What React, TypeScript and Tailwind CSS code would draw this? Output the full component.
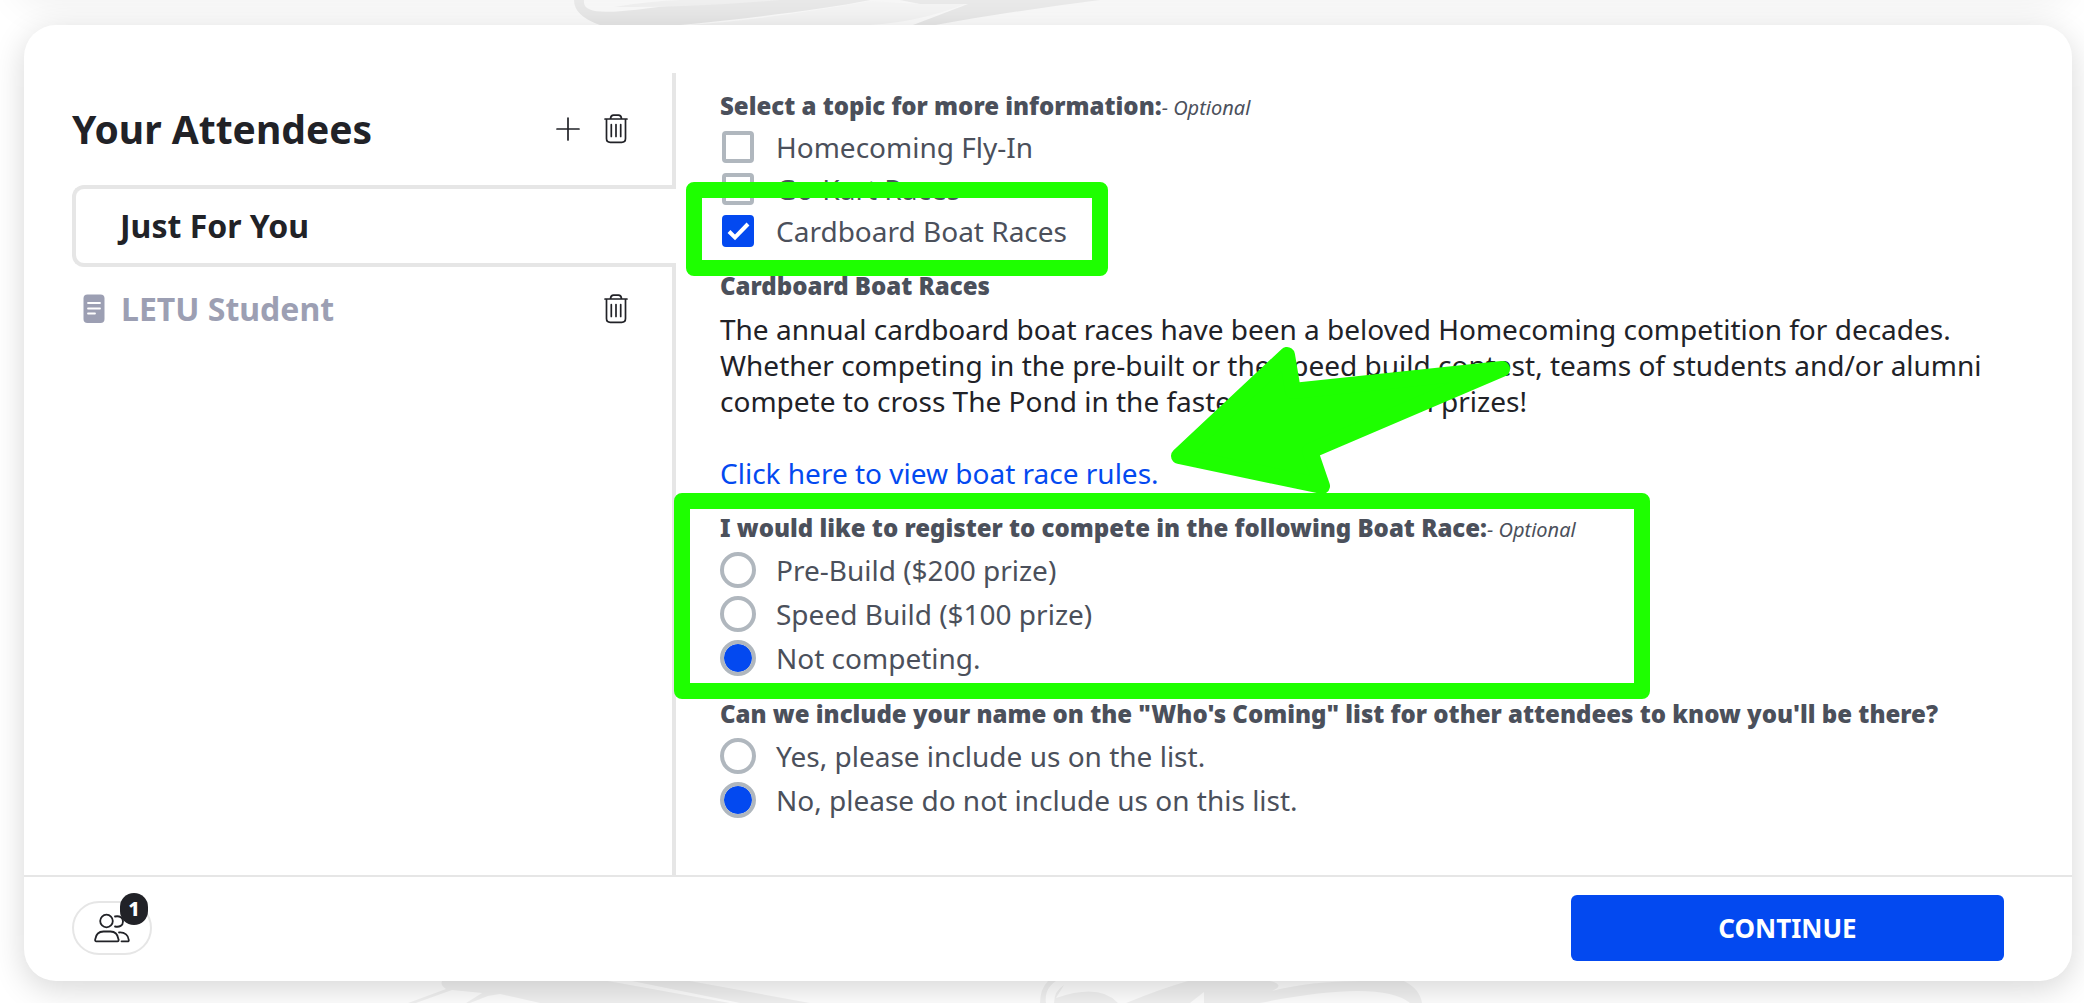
import React from "react";

function Trash() {
  return (
    <svg width="24" height="30" viewBox="0 0 24 30" fill="none" stroke="#212227" strokeWidth="1.7" strokeLinecap="round" strokeLinejoin="round">
      <path d="M1 5H23M6.5 4.5C6.8 2 8 1.2 9.5 1.2H14.5C16 1.2 17.2 2 17.5 4.5M2.5 5V24.5Q2.5 28.3 6.3 28.3H17.7Q21.5 28.3 21.5 24.5V5M7.3 10.5V22.5M12 10.5V22.5M16.7 10.5V22.5" />
    </svg>
  );
}

function Plus() {
  return (
    <svg width="24" height="24" viewBox="0 0 24 24" stroke="#212227" strokeWidth="1.7" strokeLinecap="round">
      <path d="M1 12H23M12 1V23" />
    </svg>
  );
}

function Doc() {
  return (
    <svg width="22" height="30" viewBox="0 0 22 30">
      <rect x="0.5" y="0.5" width="21" height="28.5" rx="4" fill="#9c9fb3" />
      <path d="M5 9H17M5 14.5H17M5 19.5H12" stroke="#fff" strokeWidth="1.8" strokeLinecap="round" />
    </svg>
  );
}

function People() {
  return (
    <svg width="36" height="30" viewBox="0 0 36 30" fill="none" stroke="#212227" strokeWidth="1.8" strokeLinecap="round" strokeLinejoin="round">
      <circle cx="12.5" cy="8" r="6.3" />
      <path d="M2 28.3H23.5C24.5 28.3 24.8 27.5 24.5 26.3C23.7 21 20.5 18.5 16.5 18.5H9.5C5.5 18.5 2 21 1.2 26.3C1 27.5 1.2 28.3 2 28.3ZM21 3.5C26 2.5 29 5 29 8.5C29 12.5 25.5 14.5 21 13.5M25 19.5C31 19 34.5 22.5 34.8 27C34.9 28 34.5 28.3 33.5 28.3H27.5" />
    </svg>
  );
}

function Check({ label, checked }: { label: string; checked?: boolean }) {
  return (
    <label className="flex h-[42px] items-center gap-[22px] pl-0.5 text-[28px] text-[#4b505b]">
      <span className="grid">
        <input type="checkbox" defaultChecked={checked} className="peer col-start-1 row-start-1 size-8 appearance-none rounded border-4 border-[#b0b7be] bg-white checked:border-[#0349f0] checked:bg-[#0349f0]" />
        <svg className="pointer-events-none col-start-1 row-start-1 hidden size-8 peer-checked:block" viewBox="0 0 32 32" fill="none" stroke="#fff" strokeWidth="4">
          <path d="M7 16.5L13 22.5L26 9" />
        </svg>
      </span>
      {label}
    </label>
  );
}

function Radio({ label, name, checked }: { label: string; name: string; checked?: boolean }) {
  return (
    <label className="flex h-11 items-center gap-5 text-[28px] text-[#4b505b]">
      <input type="radio" name={name} defaultChecked={checked} className="size-9 appearance-none rounded-full border-4 border-[#b0b7be] bg-white bg-clip-padding checked:bg-[#0349f0]" />
      {label}
    </label>
  );
}

const legend = "block text-[24px] leading-[40px] font-black text-[#4b505b]";

export default function App() {
  return (
    <div className="relative overflow-hidden bg-white px-3 pt-[25px] pb-[22px] font-['Noto_Sans','Open_Sans',sans-serif] text-[#212227]">
      <div className="absolute inset-x-6 -top-8 h-6 rounded-b-[32px] shadow-[0_4px_40px_12px_rgba(0,0,0,0.06)]" />
      <svg className="absolute top-0 left-[560px]" width="560" height="25" viewBox="0 0 560 25">
        <path d="M14 0H24C22 16 50 14 120 4L140 0H310C260 10 190 18 120 25H40Q14 16 14 0Z" fill="#e8e8e8" />
        <path d="M54 7Q100 -1 140 0H220Q130 8 54 7Z" fill="#efefef" />
        <path d="M340 0H540Q460 10 375 25H353L408 4H360Z" fill="#e9e9e9" />
        <path d="M360 4H405Q360 22 310 25H130Q210 19 310 1Z" fill="#f4f4f4" />
      </svg>
      <main className="relative ml-3 rounded-[32px] bg-white shadow-[0_8px_32px_rgba(0,0,0,0.16)]">
        <div className="flex pt-12">
          <aside className="flex w-[652px] shrink-0 flex-col pl-12">
            <div className="flex h-28 items-center border-r-4 border-[#e6e6e6] pr-11">
              <h1 className="grow text-[39px] leading-[54px] font-bold">Your Attendees</h1>
              <button aria-label="Add attendee" className="mr-6"><Plus /></button>
              <button aria-label="Remove all attendees"><Trash /></button>
            </div>
            <button className="h-[82px] rounded-l-xl border-4 border-r-0 border-[#e6e6e6] pl-11 text-left text-[32px] font-bold">Just For You</button>
            <div className="flex grow items-start border-r-4 border-[#e6e6e6] pt-5 pr-11 pl-[11px]">
              <div className="flex h-[44px] grow items-center">
                <Doc />
                <a href="#student" className="ml-4 grow text-[32px] leading-[42px] font-bold text-[#9c9fb3]">LETU Student</a>
                <button aria-label="Remove LETU Student"><Trash /></button>
              </div>
            </div>
          </aside>
          <form className="grow pt-[13px] pr-10 pb-[53px] pl-11">
            <fieldset>
              <legend className={legend}>Select a topic for more information:<i className="text-xl font-normal">- Optional</i></legend>
              <Check label="Homecoming Fly-In" />
              <Check label="Go-Kart Races" />
              <div className="relative">
                <Check label="Cardboard Boat Races" checked />
                <div className="pointer-events-none absolute -top-7 -left-[34px] h-[94px] w-[422px] rounded-lg border-16 border-[#1eff00]" />
              </div>
            </fieldset>
            <section className="relative mt-4">
              <h2 className="text-[24px] leading-[36px] font-black text-[#4b505b]">Cardboard Boat Races</h2>
              <p className="mt-[7px] text-[28px] leading-[36px]">
                The annual cardboard boat races have been a beloved Homecoming competition for decades.<br />
                Whether competing in the pre-built or the speed build contest, teams of students and/or alumni<br />
                compete to cross The Pond in the fastest time for cash prizes!
              </p>
              <p className="mt-9 text-[28px] leading-[36px]"><a href="#rules" className="text-[#0349f0]">Click here to view boat race rules.</a></p>
              <svg className="pointer-events-none absolute top-[77px] left-[448px] z-10" width="348" height="152" viewBox="1168 345 348 152">
                <path d="M1287 355L1179 456L1322 486L1310 451L1502 369L1293 391Z" fill="#1eff00" stroke="#1eff00" strokeWidth="16" strokeLinejoin="round" />
              </svg>
            </section>
            <div className="relative mt-[17px]">
              <fieldset>
                <legend className={legend}>I would like to register to compete in the following Boat Race:<i className="text-xl font-normal">- Optional</i></legend>
                <Radio name="race" label="Pre-Build ($200 prize)" />
                <Radio name="race" label="Speed Build ($100 prize)" />
                <Radio name="race" label="Not competing." checked />
              </fieldset>
              <div className="pointer-events-none absolute -top-[15px] -left-[46px] h-[206px] w-[976px] rounded-lg border-16 border-[#1eff00]" />
            </div>
            <fieldset className="mt-3.5">
              <legend className={legend}>Can we include your name on the "Who's Coming" list for other attendees to know you'll be there?</legend>
              <Radio name="list" label="Yes, please include us on the list." />
              <Radio name="list" label="No, please do not include us on this list." checked />
            </fieldset>
          </form>
        </div>
        <footer className="flex items-center justify-between border-t-2 border-[#e6e6e6] pt-[18px] pr-[68px] pb-5 pl-12">
          <button aria-label="Attendees: 1" className="relative flex h-[54px] w-20 items-center justify-center rounded-full border-2 border-[#e6e6e6]">
            <People />
            <span className="absolute -top-2.5 right-0.5 flex h-8 w-7 items-center justify-center rounded-full bg-[#212227] text-xl font-extrabold text-white">1</span>
          </button>
          <button className="h-[66px] w-[433px] rounded-md bg-[#0349f0] text-[26px] font-bold text-white">CONTINUE</button>
        </footer>
      </main>
      <svg className="absolute bottom-0 left-[400px]" width="1030" height="22" viewBox="0 0 1030 22" fill="#000" fillOpacity="0.05">
        <path d="M42 0H208L330 22H140L100 13L88 15L70 22H66L82 12L52 9L16 22H8L46 8Q40 4 42 0Z" />
        <path d="M232 0H290L410 22H340Z" />
        <path d="M648 0H656Q644 8 646 22H640Q640 8 648 0ZM664 4L656 17Q700 2 718 22H654Q654 10 664 4Z" />
        <path d="M788 0H870Q886 4 872 10Q910 0 960 0H1004Q1020 8 1022 22H1010Q980 -2 860 22H804V11L790 22H726Q760 8 788 0Z" />
      </svg>
    </div>
  );
}
